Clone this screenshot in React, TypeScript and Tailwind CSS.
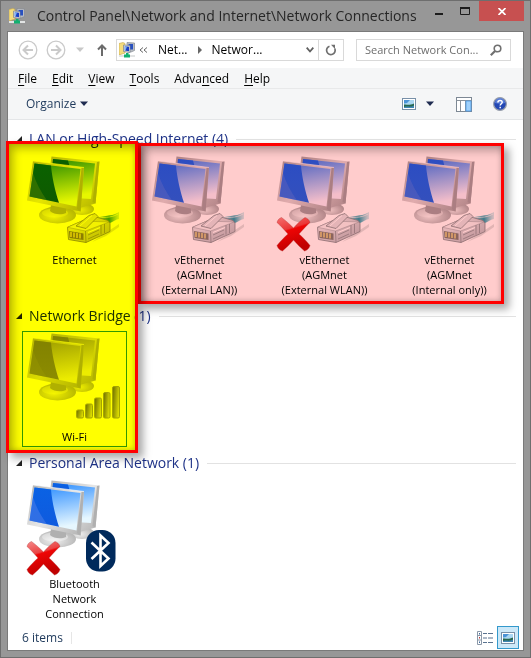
import React, { useId } from "react";

type Tone = "blue" | "deep" | "gray";
type Badge = "plug" | "cross" | "bluetooth" | "signal";

interface Connection {
  name: string[];
  tone: Tone;
  badges: Badge[];
  selected?: boolean;
}

interface Group {
  title: string;
  items: Connection[];
}

const groups: Group[] = [
  {
    title: "LAN or High-Speed Internet (4)",
    items: [
      { name: ["Ethernet"], tone: "blue", badges: ["plug"] },
      { name: ["vEthernet", "(AGMnet", "(External LAN))"], tone: "deep", badges: ["plug"] },
      { name: ["vEthernet", "(AGMnet", "(External WLAN))"], tone: "deep", badges: ["plug", "cross"] },
      { name: ["vEthernet", "(AGMnet", "(Internal only))"], tone: "deep", badges: ["plug"] },
    ],
  },
  {
    title: "Network Bridge (1)",
    items: [{ name: ["Wi-Fi"], tone: "gray", badges: ["signal"], selected: true }],
  },
  {
    title: "Personal Area Network (1)",
    items: [{ name: ["Bluetooth", "Network", "Connection"], tone: "blue", badges: ["cross", "bluetooth"] }],
  },
];

const tones = {
  blue: { a: "#2a8cff", b: "#e6f7ff", dark: "#0a62e4", mid: "#0f5ade", corner: "#6f92ee", frame: "#e6e6e6", edge: "#b0b0b0" },
  deep: { a: "#4f7cf2", b: "#f4eefc", dark: "#2c60f4", mid: "#3464ec", corner: "#7088ea", frame: "#e0d6d8", edge: "#ab9ea2" },
  gray: { a: "#9a9a9a", b: "#ececec", dark: "#828282", mid: "#8c8c8c", corner: "#9c9c9c", frame: "#dcdcdc", edge: "#b0b0b0" },
};

function ConnectionIcon({ tone, badges }: { tone: Tone; badges: Badge[] }) {
  const id = useId();
  const t = tones[tone];
  return (
    <svg viewBox="1 0 96 96" className="h-24 w-24 shrink-0 overflow-visible" aria-hidden="true">
      <defs>
        <linearGradient id={`${id}s`} x1="0" y1="0" x2="0.2" y2="1">
          <stop offset="0" stopColor={t.a} />
          <stop offset="1" stopColor={t.b} />
        </linearGradient>
        <linearGradient id={`${id}d`} x1="0" y1="0" x2="0" y2="1">
          <stop offset="0" stopColor={t.dark} />
          <stop offset="1" stopColor={t.mid} />
        </linearGradient>
        <linearGradient id={`${id}f`} x1="0" y1="0" x2="1" y2="1">
          <stop offset="0" stopColor={t.edge} />
          <stop offset="0.5" stopColor={t.frame} />
          <stop offset="1" stopColor={t.edge} />
        </linearGradient>
        <radialGradient id={`${id}b`} cx="0.4" cy="0.6" r="0.7">
          <stop offset="0" stopColor="#f0f0f0" />
          <stop offset="1" stopColor={t.edge} />
        </radialGradient>
        <linearGradient id={`${id}r`} x1="0" y1="0" x2="0.3" y2="1">
          <stop offset="0" stopColor="#f58a8a" />
          <stop offset="0.4" stopColor="#ea4444" />
          <stop offset="0.45" stopColor="#ee0505" />
          <stop offset="1" stopColor="#c00000" />
        </linearGradient>
        <linearGradient id={`${id}w`} x1="0" y1="0" x2="1" y2="0.3">
          <stop offset="0" stopColor="#6c6c6c" />
          <stop offset="1" stopColor="#dadada" />
        </linearGradient>
        <linearGradient id={`${id}c`} x1="0" y1="0" x2="1" y2="0">
          <stop offset="0" stopColor="#dfe9ec" />
          <stop offset="0.6" stopColor="#3e98ab" />
          <stop offset="1" stopColor="#7fc0cc" stopOpacity="0.3" />
        </linearGradient>
        <linearGradient id={`${id}p`} x1="0" y1="0" x2="1" y2="1">
          <stop offset="0" stopColor="#f4f2f4" />
          <stop offset="1" stopColor="#b9b5bb" />
        </linearGradient>
      </defs>
      <ellipse cx="56" cy="53" rx="12" ry="6" fill={`url(#${id}b)`} />
      <path d="M25.5 0.5 73.5 5.5 69.5 47.5 50 53 20 40Z" fill={`url(#${id}f)`} />
      <path d="M71 6 73.500 5.500 69.500 47.500 66.500 46Z" fill={t.edge} />
      <path d="M27 3 69 7.500 65 43 48 42 26 30Z" fill={`url(#${id}s)`} />
      <path d="M27 3 42 4.600 44 12 26 12Z" fill={`url(#${id}d)`} />
      <ellipse cx="31.500" cy="59" rx="18.500" ry="8.500" fill={`url(#${id}b)`} />
      <ellipse cx="29" cy="57" rx="13" ry="4.500" fill="#fff" opacity="0.35" />
      <path d="M25 49H40L40 57C36 59 28 59 24 55Z" fill={t.edge} />
      <path d="M7 5 58 11.500 54.500 55.500 1 44.500Z" fill={`url(#${id}f)`} />
      <path d="M55.500 12 58 11.500 54.500 55.500 51 53Z" fill={t.edge} />
      <path d="M7 5 58 11.500" stroke="#fff" strokeOpacity="0.6" />
      <path d="M8.500 7.500 54.500 13 50.500 50.500 3.500 40.500Z" fill={`url(#${id}s)`} />
      <path d="M8.500 7.500 25 9.500C26 21 29 35 33 46.800L3.500 40.500Z" fill={`url(#${id}d)`} />
      <path d="M7 17C10 27 15 36 21 44.200L3.500 40.500Z" fill={t.corner} opacity="0.35" />

      {badges.includes("plug") && (
        <g strokeLinejoin="round">
          <path d="M66 86 93 68 93 71 80 80Z" fill="#777" opacity="0.22" />
          <path d="M68 64C75 58 84 62 93 56V63C87 64 84 69 75 70Z" fill={`url(#${id}c)`} />
          <path d="M70 63C77 60 84 63 92 58" stroke="#f2f8f8" strokeOpacity="0.7" fill="none" />
          <path d="M41.500 71.300 56 65 70 61 82 64.500 84 67V75.500L60 86.500 42.500 83.500Z" fill={`url(#${id}p)`} stroke="#8c868c" strokeWidth="0.8" />
          <path d="M41.500 71.300 56 65 83 66 59.500 75Z" fill="#f3f1f3" stroke="#a19ba1" strokeWidth="0.5" />
          <path d="M50 70 63 59.500 69 57.500 72 60.500 60 72.500Z" fill="#e4e1e5" stroke="#8d888c" strokeWidth="0.8" />
          <path d="M54 70 66 59.500" stroke="#fff" />
          <path d="M59.500 75 60 86.500" stroke="#8c868c" strokeWidth="0.7" />
          <path d="M43 75 57.500 77.500V84L43.500 82Z" fill="#8b7d74" />
          <path d="M45 76V81M48 76.500V81.500M51 77V82M54 77.500V82.500" stroke="#e8cf84" strokeWidth="1.500" />
          <path d="M62 79 73 74M62 83 73 78M75 69V78.500M78.500 68V77" stroke="#9a949a" strokeWidth="0.9" />
          <path d="M62 76.500 74 71.500" stroke="#fff" strokeWidth="1.300" />
        </g>
      )}
      {badges.includes("signal") && (
        <g fill={`url(#${id}w)`} stroke="#a4a4a4" strokeWidth="1">
          <rect x="50.500" y="77" width="7" height="8" rx="1.500" />
          <rect x="59.500" y="71" width="7" height="14" rx="1.500" />
          <rect x="68.500" y="65" width="7" height="20" rx="1.500" />
          <rect x="77.500" y="59.500" width="6.500" height="25.500" rx="1.500" />
          <rect x="86.500" y="53.500" width="7" height="31.500" rx="1.500" />
        </g>
      )}
      {badges.includes("bluetooth") && (
        <g>
          <rect x="60" y="50" width="29.500" height="41.500" rx="13" fill="#002a5c" />
          <path d="M65.500 62.500 82.500 78.500 74.500 86V55.500L82.500 63 65.500 79" fill="none" stroke="#fff" strokeWidth="2.600" />
        </g>
      )}
      {badges.includes("cross") && (
        <path
          d="M5.500 61.500C9 64 13.500 68 17.500 72 21 68 25 64 29 61.500 31 62 33.500 64 34 66.500 30.500 69.500 26.500 74 23 78 26.500 81 31 85.500 34 89.500 33.500 92 31 94.500 28.500 95 25 92 21 88 17.500 84 14 88 10 92 6.500 95 4 94.500 1.500 92 1 89.500 4 85.500 8.500 81 12 78 8.500 74 4.500 69.500 1 66.500 1.500 64 3.500 62 5.500 61.500Z"
          fill={`url(#${id}r)`}
          stroke="#b03030"
          strokeOpacity="0.5"
          strokeWidth="0.7"
        />
      )}
    </svg>
  );
}

function NetworkFolderIcon() {
  return (
    <svg viewBox="0 0 16 16" className="h-4 w-4 shrink-0" aria-hidden="true">
      <path d="M0 1.500 4 0.500 6 1.500V11L0 13Z" fill="#f4dc7c" stroke="#c8a84a" strokeWidth="0.6" />
      <path d="M8 0.500 15.500 1V8.500L12 10H8Z" fill="#b9bdc4" stroke="#858a92" strokeWidth="0.7" />
      <path d="M9.500 2H14V7.500H9.500Z" fill="#2850c0" />
      <path d="M4.500 3 11 3.500V10.500L4.500 9.500Z" fill="#d9dce2" stroke="#7b8189" strokeWidth="0.7" />
      <path d="M5.800 4.300 10 4.700V9.200L5.800 8.500Z" fill="#1c3fc4" />
      <path d="M5.800 4.300 8 4.500 6.500 8.600H5.800Z" fill="#7fb5f4" />
      <path d="M0 14H16" stroke="#e2e4e4" strokeWidth="2" />
      <path d="M7 11H9.500V12.500H11V15.500H5V12.500H7Z" fill="#12b070" />
    </svg>
  );
}

function PictureIcon() {
  return (
    <svg viewBox="0 0 14 12" className="h-3 w-3.5" aria-hidden="true">
      <rect x="0.5" y="0.5" width="13" height="11" fill="#fff" stroke="#7890a8" />
      <rect x="2" y="2" width="10" height="8" fill="#a9d6f2" />
      <path d="M2 2H8L5 5 2 5.500Z" fill="#4a93d6" />
      <path d="M2 6.500C5 6 6 8 12 5.500V10H2Z" fill="#28684e" />
      <path d="M2 9C6 8 9 9.500 12 7.500V10H2Z" fill="#3f86b4" />
    </svg>
  );
}

function Triangle({ className }: { className: string }) {
  return (
    <svg viewBox="0 0 8 5" className={`h-1.5 w-2 ${className}`} aria-hidden="true">
      <path d="M0 0H8L4 4.500Z" fill="currentColor" />
    </svg>
  );
}

function CircleArrow({ label, flip }: { label: string; flip?: boolean }) {
  return (
    <button type="button" aria-label={label} className="text-[#cacaca]">
      <svg viewBox="0 0 20 20" className={flip ? "h-5 w-5 -scale-x-100" : "h-5 w-5"} fill="none" stroke="currentColor">
        <circle cx="10" cy="10" r="8.800" strokeWidth="1.300" />
        <path d="M15 10H6M10 5.500 5.500 10 10 14.500" strokeWidth="2" />
      </svg>
    </button>
  );
}

function TitleBar() {
  return (
    <header className="flex h-[30px] items-start pl-2">
      <div className="flex min-w-0 flex-1 items-center gap-3 pt-1">
        <NetworkFolderIcon />
        <h1 className="truncate text-[14px] leading-[22px] text-[#262626]">
          Control Panel\Network and Internet\Network Connections
        </h1>
      </div>
      <button type="button" aria-label="Minimize" className="flex h-5 w-4 items-center justify-center">
        <svg viewBox="0 0 10 10" className="h-2.5 w-2.5"><path d="M1 8H9" stroke="#1c1c1c" strokeWidth="2" /></svg>
      </button>
      <button type="button" aria-label="Maximize" className="ml-1 flex h-5 w-7 items-center justify-center">
        <svg viewBox="0 0 10 8" className="h-2 w-2.5"><path d="M0.500 1H9.500V7.500H0.500Z" fill="none" stroke="#1c1c1c" /><path d="M0 1H10" stroke="#1c1c1c" strokeWidth="2" /></svg>
      </button>
      <button type="button" aria-label="Close" className="mr-1.5 flex h-5 w-[45px] items-center justify-center bg-[#c75050]">
        <svg viewBox="0 0 8 7" className="h-[7px] w-2"><path d="M0.500 0 7.500 7M7.500 0 0.500 7" stroke="#fff" strokeWidth="1.700" /></svg>
      </button>
    </header>
  );
}

function NavigationBar() {
  return (
    <nav className="flex h-9 items-center pl-2.5 pr-3" aria-label="Navigation">
      <CircleArrow label="Back" />
      <div className="w-2" />
      <CircleArrow label="Forward" flip />
      <button type="button" aria-label="Recent locations" className="ml-2.5 text-[#c8c8c8]">
        <Triangle className="block" />
      </button>
      <button type="button" aria-label="Up" className="ml-3 text-[#6b6b6b]">
        <svg viewBox="0 0 12 12" className="h-3 w-3" fill="none" stroke="currentColor" strokeWidth="2">
          <path d="M6 12V1.500M2 5.500 6 1.500 10 5.500" />
        </svg>
      </button>
      <div className="ml-2 flex h-[22px] min-w-0 flex-1 items-center border border-[#d9d9d9] pl-0.5 text-[12px] text-black">
        <NetworkFolderIcon />
        <svg viewBox="0 0 9 6" className="ml-1 h-1.5 w-[9px] shrink-0" fill="none" stroke="#666">
          <path d="M4 0.500 1 3 4 5.500M8 0.500 5 3 8 5.500" />
        </svg>
        <button type="button" className="ml-2.5">Net...</button>
        <svg viewBox="0 0 4 8" className="ml-2.5 h-2 w-1 shrink-0"><path d="M0 0 4 4 0 8Z" fill="#666" /></svg>
        <button type="button" className="ml-2.5">Networ...</button>
        <button type="button" aria-label="Previous locations" className="ml-auto mr-1 shrink-0">
          <svg viewBox="0 0 8 6" className="h-1.5 w-2" fill="none" stroke="#606060" strokeWidth="1.800"><path d="M0.700 0.700 4 4.500 7.300 0.700" /></svg>
        </button>
        <button type="button" aria-label="Refresh" className="flex h-full w-[25px] shrink-0 items-center justify-center border-l border-[#d9d9d9]">
          <svg viewBox="0 0 12 12" className="h-3 w-3" fill="none" stroke="#707070" strokeWidth="1.700">
            <path d="M4.500 2.200A4.300 4.300 0 1 0 9.800 4.500" /><path d="M6 0.800H10V5Z" fill="#707070" stroke="none" />
          </svg>
        </button>
      </div>
      <label className="ml-3 flex h-[22px] w-[155px] items-center border border-[#d9d9d9] pl-2 pr-2">
        <input
          type="text"
          aria-label="Search Network Connections"
          placeholder="Search Network Con..."
          className="min-w-0 flex-1 text-[11px] outline-none placeholder:text-[#6d6d6d]"
        />
        <svg viewBox="0 0 12 12" className="h-3 w-3 shrink-0" fill="none" stroke="#707070">
          <circle cx="7.500" cy="4.500" r="3.300" strokeWidth="1.600" /><path d="M5 7 0.800 11.200" strokeWidth="2.200" />
        </svg>
      </label>
    </nav>
  );
}

const menus: [string, string, string][] = [
  ["", "F", "ile"],
  ["", "E", "dit"],
  ["", "V", "iew"],
  ["", "T", "ools"],
  ["Adva", "n", "ced"],
  ["", "H", "elp"],
];

function CommandBars() {
  return (
    <div className="bg-[#f5f6f7]">
      <div role="menubar" className="flex h-[21px] items-center gap-[15px] border-b border-[#e8e9ea] pl-2.5 text-[12px] leading-[15px] text-black">
        {menus.map(([before, key, after]) => (
          <button key={key} type="button" role="menuitem">
            {before}<span className="underline underline-offset-2">{key}</span>{after}
          </button>
        ))}
      </div>
      <div className="flex h-[31px] items-center border-b border-[#e4e6e8] pl-[18px] pr-4 text-[12px] text-[#1e395b]">
        <button type="button" className="flex items-center gap-1">
          Organize <Triangle className="text-[#1e2b50]" />
        </button>
        <button type="button" aria-label="Change view" className="ml-auto"><PictureIcon /></button>
        <button type="button" aria-label="More view options" className="ml-2.5 text-[#1e2b50]"><Triangle className="block" /></button>
        <button type="button" aria-label="Preview pane" className="ml-[22px]">
          <svg viewBox="0 0 16 15" className="h-[15px] w-4">
            <rect x="0.500" y="0.500" width="15" height="14" fill="#fff" stroke="#7d8894" />
            <path d="M0.500 3.500H15.500M4.500 3.500V14M9.500 3.500V14" stroke="#8a929b" />
            <rect x="10" y="4" width="5" height="10" fill="#9fd0fb" stroke="#4a9ae6" strokeWidth="0.8" />
          </svg>
        </button>
        <button type="button" aria-label="Help" className="ml-[21px]">
          <svg viewBox="0 0 14 14" className="h-3.5 w-3.5">
            <circle cx="7" cy="7" r="6.400" fill="#2448b4" stroke="#9aa0aa" strokeWidth="1.200" />
            <path d="M2 6A5 5 0 0 1 12 6C9 7 5 7 2 6Z" fill="#6f92e4" opacity="0.7" />
            <path d="M4.900 5.500C4.900 2.700 9.300 2.900 9.200 5.300 9.100 6.700 7.200 6.800 7.200 8.600M7.200 9.800V11.300" fill="none" stroke="#fff" strokeWidth="1.500" />
          </svg>
        </button>
      </div>
    </div>
  );
}

function ConnectionGroup({ group }: { group: Group }) {
  return (
    <section>
      <h2 className="flex h-[30px] items-center text-[14px] leading-5 text-[#1e3287]">
        <svg viewBox="0 0 6 6" className="mr-[7px] h-1.5 w-1.5 shrink-0"><path d="M6 0V6H0Z" fill="#222" /></svg>
        <span className="shrink-0">{group.title}</span>
        <span className="ml-2 h-px flex-1 bg-[#e2e2e2]" />
      </h2>
      <ul className="flex gap-5 pb-px pl-1.5">
        {group.items.map((item) => (
          <li key={item.name.join(" ")}>
            <button
              type="button"
              className={`flex w-[105px] flex-col items-center border pt-px pb-0.5 text-[11px] leading-[15px] text-black ${
                item.selected ? "border-[#3399ff]" : "border-transparent"
              }`}
            >
              <ConnectionIcon tone={item.tone} badges={item.badges} />
              {item.name.map((line) => (
                <span key={line} className="whitespace-nowrap">{line}</span>
              ))}
            </button>
          </li>
        ))}
      </ul>
    </section>
  );
}

function Highlight({ area, tint }: { area: string; tint: string }) {
  return (
    <>
      <div className={`pointer-events-none absolute mix-blend-multiply ${area} ${tint}`} />
      <div
        className={`pointer-events-none absolute border-3 border-[#ff0000] shadow-[5px_5px_8px_rgba(0,0,0,0.35),inset_4px_4px_10px_rgba(0,0,0,0.3),inset_-1px_-1px_4px_rgba(0,0,0,0.12)] ${area}`}
      />
    </>
  );
}

export default function App() {
  return (
    <div className="border border-[#6e6e6e] bg-[#979797] font-['Open_Sans','Noto_Sans',sans-serif]">
      <TitleBar />
      <div className="mx-1.5 mb-1.5 border border-[#7a7a7a] bg-white">
        <NavigationBar />
        <CommandBars />
        <main className="relative pl-2 pr-[7px] pt-1">
          {groups.map((group) => (
            <ConnectionGroup key={group.title} group={group} />
          ))}
          <Highlight area="top-[23px] left-[130px] w-[366px] h-[161px]" tint="bg-[#ffcccc]" />
          <Highlight area="top-[21px] -left-0.5 w-[132px] h-[312px]" tint="bg-[#ffff00]" />
        </main>
        <footer className="flex h-[25px] items-center pl-3.5 pr-1 text-[12px] text-[#1e395b]">
          <span>6 items</span>
          <span className="ml-2 h-3 w-px bg-[#e6e6e6]" />
          <button type="button" aria-label="Details view" className="ml-auto mr-1">
            <svg viewBox="0 0 16 14" className="h-3.5 w-4" fill="none">
              <path d="M0.500 0.500H4.500V13.500H0.500ZM0.500 4.500H4.500M0.500 9H4.500" stroke="#8b98a8" />
              <path d="M2.500 2V3.500M2.500 10.500V12" stroke="#426a9a" /><path d="M2.500 6V7.500" stroke="#b83838" />
              <path d="M6 2.500H10M11 2.500H16M6 7H10M11 7H16M6 11.500H10M11 11.500H16" stroke="#5a7390" />
            </svg>
          </button>
          <button type="button" aria-label="Large icons view" className="flex h-[23px] w-[22px] items-center justify-center border border-[#3399cc] bg-[#cce8f8]">
            <PictureIcon />
          </button>
        </footer>
      </div>
    </div>
  );
}
